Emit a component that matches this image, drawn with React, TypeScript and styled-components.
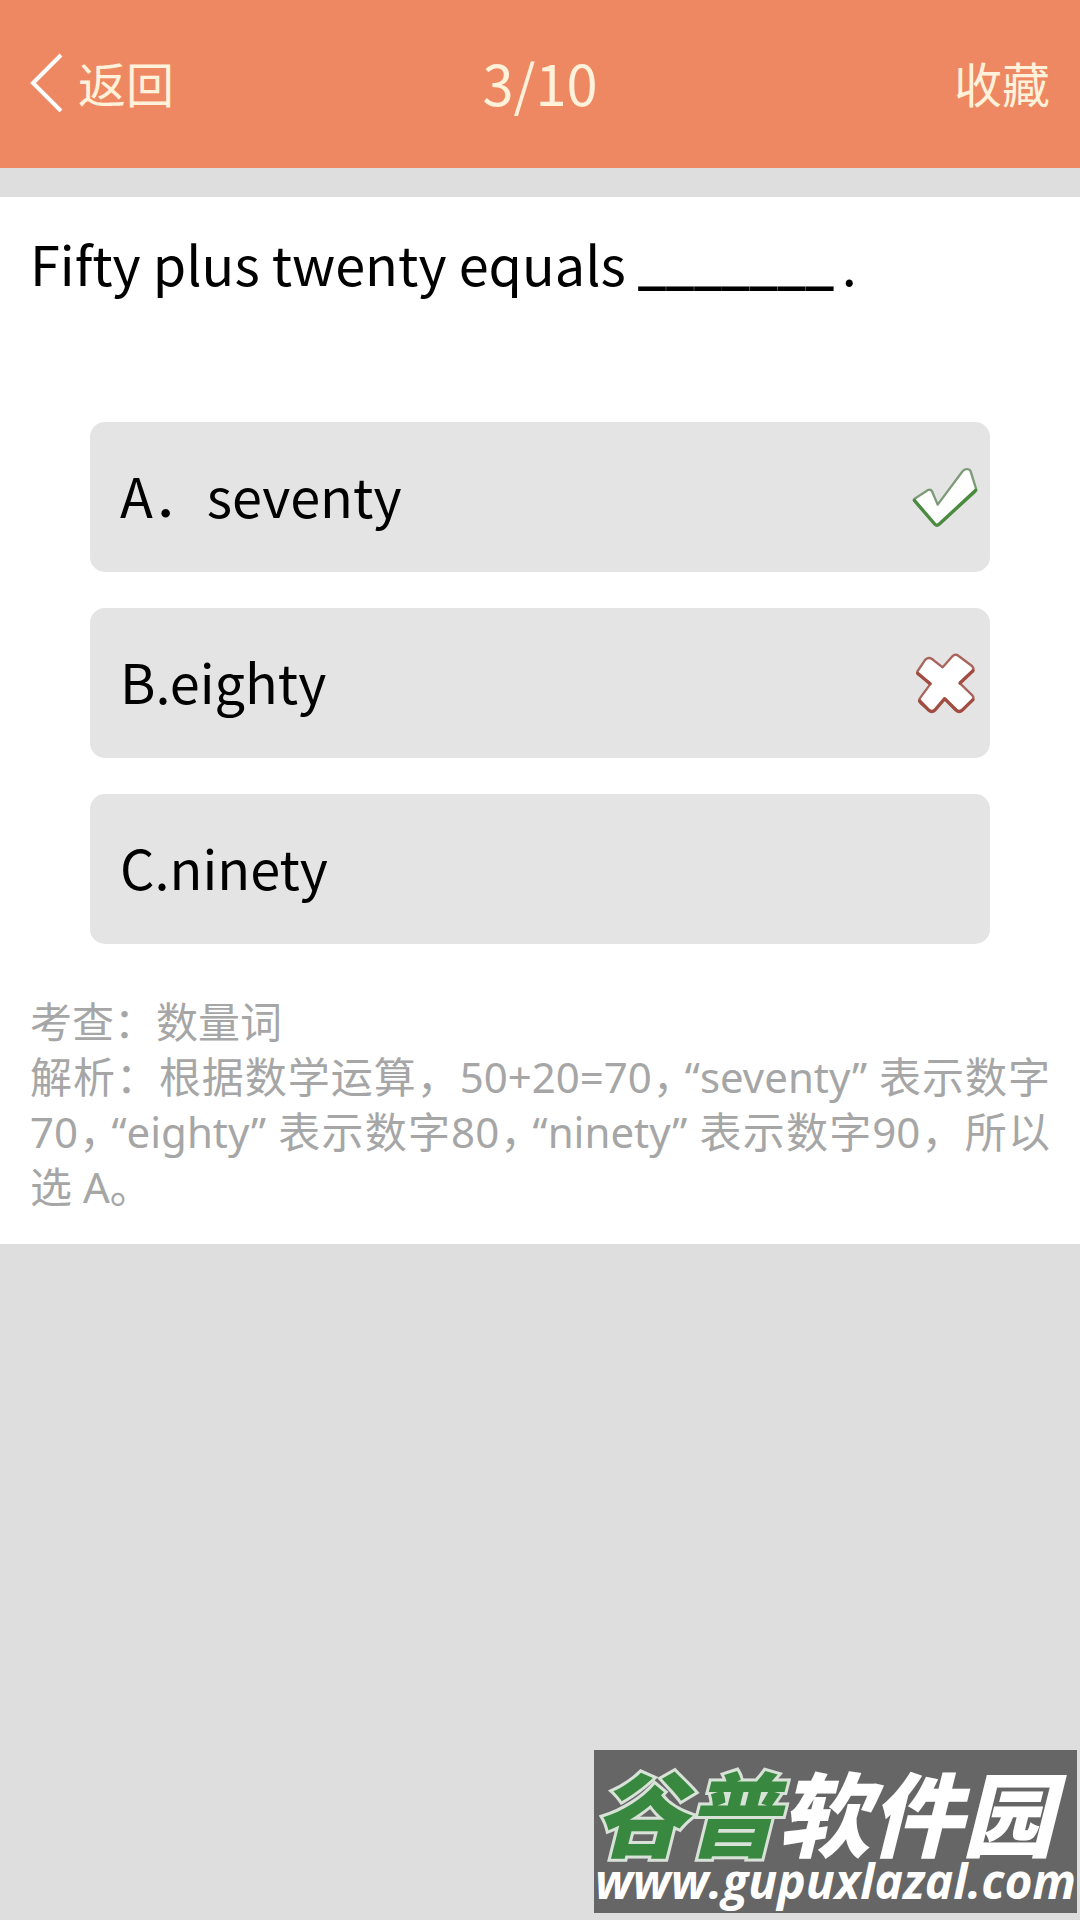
import React from "react";
import styled, { createGlobalStyle } from "styled-components";

const GlobalStyle = createGlobalStyle`
  * { box-sizing: border-box; }
  body {
    margin: 0;
    background: #dedede;
    font-family: "Noto Sans CJK SC", sans-serif;
  }
  button { font: inherit; color: inherit; border: 0; background: none; padding: 0; cursor: pointer; }
`;

const Page = styled.div`
  min-height: 100vh;
  display: flex;
  flex-direction: column;
`;

const Header = styled.header`
  display: grid;
  grid-template-columns: 1fr auto 1fr;
  align-items: center;
  height: 168px;
  padding: 0 30px 4px;
  background: #ee8862;
  color: #fff1da;
`;

const HeaderButton = styled.button<{ $side: "start" | "end" }>`
  display: flex;
  align-items: center;
  gap: 14px;
  justify-self: ${(p) => p.$side};
  font-size: 48px;
  line-height: 72px;
`;

const Title = styled.h1`
  margin: 0;
  font-size: 56px;
  font-weight: 400;
  line-height: 72px;
`;

const Card = styled.main`
  margin-top: 29px;
  padding: 26px 30px 30px;
  background: #fff;
`;

const Question = styled.h2`
  margin: 0;
  font-size: 54px;
  font-weight: 400;
  line-height: 80px;
  color: #000;
`;

const Blank = styled.span`
  padding-right: 8px;
  font-family: Roboto, sans-serif;
  font-size: 62px;
  line-height: 1;
`;

const Options = styled.ul`
  display: flex;
  flex-direction: column;
  gap: 36px;
  margin: 119px 60px 50px;
  padding: 0;
  list-style: none;
`;

const Option = styled.button`
  display: flex;
  align-items: center;
  justify-content: space-between;
  width: 100%;
  height: 150px;
  padding: 0 12px 0 30px;
  border-radius: 15px;
  background: #e4e4e4;
  font-size: 54px;
  line-height: 80px;
  color: #000;
`;

const OptionLabel = styled.span`
  padding-bottom: 4px;
`;

const Analysis = styled.p`
  margin: 0;
  font-family: "Noto Sans", "Noto Sans CJK SC", sans-serif;
  font-size: 42px;
  line-height: 55px;
  text-align: justify;
  color: #a6a6a6;
`;

/* A full-width comma trimmed on its right, for use before an opening quote. */
const TrimmedComma = styled.span`
  margin-right: 10px;
  font-feature-settings: "halt";
  line-height: 1;
`;

const Watermark = styled.footer`
  align-self: flex-end;
  display: flex;
  flex-direction: column;
  margin: auto 3px 7px 0;
  padding-top: 10px;
  width: 483px;
  height: 163px;
  background: #666;
  color: #fff;
  font-style: italic;
  white-space: nowrap;
`;

const Brand = styled.div`
  display: flex;
  font-size: 92px;
  font-weight: 900;
  line-height: 100px;
`;

const BrandAccent = styled.span`
  color: #38893f;
  -webkit-text-stroke: 6px #d9e2d9;
  paint-order: stroke fill;
`;

const SiteLink = styled.a`
  align-self: center;
  font-family: "Open Sans", sans-serif;
  font-size: 48px;
  font-weight: 700;
  line-height: 42px;
  color: inherit;
  text-decoration: none;
`;

const BackIcon = () => (
  <svg width="34" height="60" viewBox="0 0 34 60" fill="none" stroke="#fff" strokeWidth="4" aria-hidden="true">
    <path d="M31 3 3 31l28 28" />
  </svg>
);

const RightMark = () => (
  <svg width="66" height="66" viewBox="96 162 198 198" role="img" aria-label="正确">
    <path
      d="M104 266Q101 271 106 276L164 343Q170 350 178 343L284 247Q290 242 288 236L272 184Q268 176 256 178Q250 180 246 186L173 284L157 246Q154 237 144 240Z"
      fill="#fff"
      stroke="#7e9b79"
      strokeWidth="7"
      strokeLinejoin="round"
    />
    <path d="M103 271L164 342Q170 349 178 342L287 241" fill="none" stroke="#4b8b40" strokeWidth="10" strokeLinejoin="round" strokeLinecap="round" />
  </svg>
);

const WrongMark = () => (
  <svg width="66" height="66" viewBox="96 720 198 198" role="img" aria-label="错误">
    <path
      d="M115 780L136 749Q146 740 156 747L188 772L216 740Q226 730 236 738L276 768Q284 776 277 784L240 820L277 856Q284 864 276 873L246 901Q237 908 228 900L194 866L165 900Q156 908 147 901L121 879Q114 872 121 863L152 821L114 793Q109 787 115 780Z"
      fill="#fff"
      stroke="#a9655c"
      strokeWidth="7"
      strokeLinejoin="round"
    />
    <path
      d="M113 790L150 821M119 873L147 901Q156 908 165 900L194 866L228 900Q237 908 246 901L279 869M279 782L240 819"
      fill="none"
      stroke="#a24d41"
      strokeWidth="10"
      strokeLinecap="round"
      strokeLinejoin="round"
    />
  </svg>
);

const options = [
  { label: "A．seventy", mark: <RightMark /> },
  { label: "B.eighty", mark: <WrongMark /> },
  { label: "C.ninety", mark: null },
];

export default function App() {
  return (
    <Page lang="zh-CN">
      <GlobalStyle />
      <Header>
        <HeaderButton type="button" $side="start">
          <BackIcon />
          返回
        </HeaderButton>
        <Title>3/10</Title>
        <HeaderButton type="button" $side="end">收藏</HeaderButton>
      </Header>
      <Card>
        <Question>
          Fifty plus twenty equals <Blank>_______</Blank>.
        </Question>
        <Options>
          {options.map((option) => (
            <li key={option.label}>
              <Option type="button">
                <OptionLabel>{option.label}</OptionLabel>
                {option.mark}
              </Option>
            </li>
          ))}
        </Options>
        <Analysis>
          考查：数量词
          <br />
          解析：根据数学运算，50+20=70<TrimmedComma>，</TrimmedComma>“seventy” 表示数字70<TrimmedComma>，</TrimmedComma>“eighty”
          表示数字80<TrimmedComma>，</TrimmedComma>“ninety” 表示数字90，所以选 A。
        </Analysis>
      </Card>
      <Watermark>
        <Brand>
          <BrandAccent>谷普</BrandAccent>
          <span>软件园</span>
        </Brand>
        <SiteLink href="#">www.gupuxlazal.com</SiteLink>
      </Watermark>
    </Page>
  );
}
